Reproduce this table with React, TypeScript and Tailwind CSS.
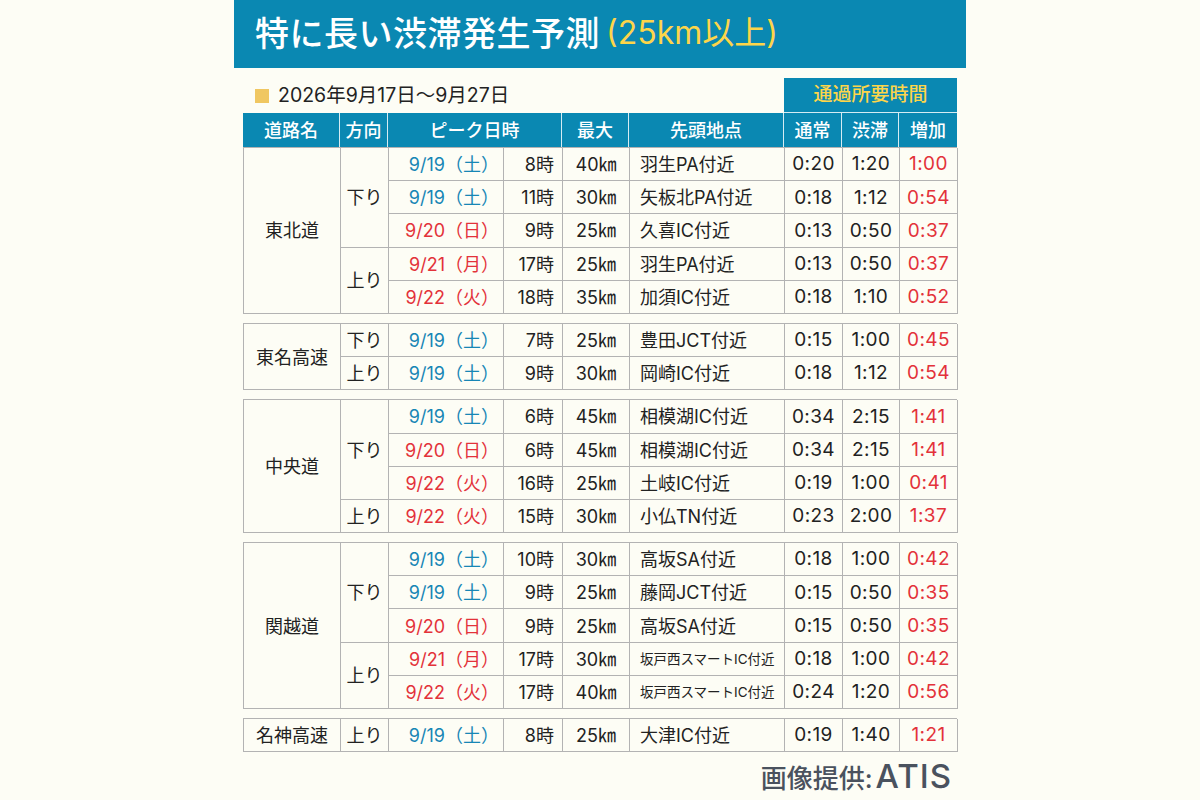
import React from 'react';

type Row = {
  date: string;
  red?: boolean;
  hour: string;
  km: string;
  place: string;
  small?: boolean;
  normal: string;
  jam: string;
  diff: string;
};

type Dir = { dir: string; rows: Row[] };
type Group = { road: string; dirs: Dir[] };

const groups: Group[] = [
  {
    road: '東北道',
    dirs: [
      {
        dir: '下り',
        rows: [
          { date: '9/19（土）', hour: '8時', km: '40㎞', place: '羽生PA付近', normal: '0:20', jam: '1:20', diff: '1:00' },
          { date: '9/19（土）', hour: '11時', km: '30㎞', place: '矢板北PA付近', normal: '0:18', jam: '1:12', diff: '0:54' },
          { date: '9/20（日）', red: true, hour: '9時', km: '25㎞', place: '久喜IC付近', normal: '0:13', jam: '0:50', diff: '0:37' },
        ],
      },
      {
        dir: '上り',
        rows: [
          { date: '9/21（月）', red: true, hour: '17時', km: '25㎞', place: '羽生PA付近', normal: '0:13', jam: '0:50', diff: '0:37' },
          { date: '9/22（火）', red: true, hour: '18時', km: '35㎞', place: '加須IC付近', normal: '0:18', jam: '1:10', diff: '0:52' },
        ],
      },
    ],
  },
  {
    road: '東名高速',
    dirs: [
      { dir: '下り', rows: [{ date: '9/19（土）', hour: '7時', km: '25㎞', place: '豊田JCT付近', normal: '0:15', jam: '1:00', diff: '0:45' }] },
      { dir: '上り', rows: [{ date: '9/19（土）', hour: '9時', km: '30㎞', place: '岡崎IC付近', normal: '0:18', jam: '1:12', diff: '0:54' }] },
    ],
  },
  {
    road: '中央道',
    dirs: [
      {
        dir: '下り',
        rows: [
          { date: '9/19（土）', hour: '6時', km: '45㎞', place: '相模湖IC付近', normal: '0:34', jam: '2:15', diff: '1:41' },
          { date: '9/20（日）', red: true, hour: '6時', km: '45㎞', place: '相模湖IC付近', normal: '0:34', jam: '2:15', diff: '1:41' },
          { date: '9/22（火）', red: true, hour: '16時', km: '25㎞', place: '土岐IC付近', normal: '0:19', jam: '1:00', diff: '0:41' },
        ],
      },
      { dir: '上り', rows: [{ date: '9/22（火）', red: true, hour: '15時', km: '30㎞', place: '小仏TN付近', normal: '0:23', jam: '2:00', diff: '1:37' }] },
    ],
  },
  {
    road: '関越道',
    dirs: [
      {
        dir: '下り',
        rows: [
          { date: '9/19（土）', hour: '10時', km: '30㎞', place: '高坂SA付近', normal: '0:18', jam: '1:00', diff: '0:42' },
          { date: '9/19（土）', hour: '9時', km: '25㎞', place: '藤岡JCT付近', normal: '0:15', jam: '0:50', diff: '0:35' },
          { date: '9/20（日）', red: true, hour: '9時', km: '25㎞', place: '高坂SA付近', normal: '0:15', jam: '0:50', diff: '0:35' },
        ],
      },
      {
        dir: '上り',
        rows: [
          { date: '9/21（月）', red: true, hour: '17時', km: '30㎞', place: '坂戸西スマートIC付近', small: true, normal: '0:18', jam: '1:00', diff: '0:42' },
          { date: '9/22（火）', red: true, hour: '17時', km: '40㎞', place: '坂戸西スマートIC付近', small: true, normal: '0:24', jam: '1:20', diff: '0:56' },
        ],
      },
    ],
  },
  {
    road: '名神高速',
    dirs: [{ dir: '上り', rows: [{ date: '9/19（土）', hour: '8時', km: '25㎞', place: '大津IC付近', normal: '0:19', jam: '1:40', diff: '1:21' }] }],
  },
];

const span: Record<number, string> = {
  1: 'row-span-1',
  2: 'row-span-2',
  3: 'row-span-3',
  4: 'row-span-4',
  5: 'row-span-5',
};

const cols = 'grid grid-cols-[97px_48px_115px_59px_67px_155px_58px_57px_58px]';
const cell = 'flex items-center pt-[1px] border-r border-b border-[#b3b3b3]';
const time = 'justify-center text-[19px] tracking-[0.4px]';

function GroupTable({ group }: { group: Group }) {
  const total = group.dirs.reduce((n, d) => n + d.rows.length, 0);
  return (
    <div className={`${cols} auto-rows-[33.2px] border-l border-t border-[#b3b3b3] text-[18px] text-[#222]`}>
      <div className={`${cell} ${span[total]} justify-center`}>{group.road}</div>
      {group.dirs.map((d, di) => (
        <React.Fragment key={di}>
          <div className={`${cell} ${span[d.rows.length]} justify-center`}>{d.dir}</div>
          {d.rows.map((r, ri) => (
            <React.Fragment key={ri}>
              <div className={`${cell} justify-end pr-[4px] ${r.red ? 'text-[#e3323a]' : 'text-[#1786b5]'}`}>{r.date}</div>
              <div className={`${cell} justify-end pr-[8px]`}>{r.hour}</div>
              <div className={`${cell} justify-center`}>{r.km}</div>
              <div className={`${cell} pl-[10px] ${r.small ? 'text-[13.5px]' : ''}`}>{r.place}</div>
              <div className={`${cell} ${time}`}>{r.normal}</div>
              <div className={`${cell} ${time}`}>{r.jam}</div>
              <div className={`${cell} ${time} text-[#e3323a]`}>{r.diff}</div>
            </React.Fragment>
          ))}
        </React.Fragment>
      ))}
    </div>
  );
}

export default function App() {
  return (
    <div
      className="min-h-screen w-full bg-[#fdfdf5] flex justify-center"
      style={{ fontFamily: 'Inter, "Noto Sans CJK JP", sans-serif' }}
    >
      <div className="w-[732px]">
        {/* Title */}
        <div className="h-[68px] bg-[#0a88b2] flex items-center pl-[21px] pb-[2px]">
          <span className="text-[34px] font-medium text-white tracking-[0.5px]">特に長い渋滞発生予測</span>
          <span className="ml-[6px] text-[32px] text-[#fdd54a]">(25km以上)</span>
        </div>

        <div className="px-[9px]">
          {/* Period + time header */}
          <div className="flex items-center justify-between pt-[10px]">
            <div className="flex items-center gap-[9px] pl-[12px]">
              <span className="w-[14px] h-[14px] bg-[#f0c761]" />
              <span className="text-[19.5px] text-[#222]">2026年9月17日～9月27日</span>
            </div>
            <div className="w-[173px] h-[35px] bg-[#0a88b2] border-b border-[#d6ecf3] flex items-center justify-center text-[19px] font-medium text-[#fdd54a]">
              通過所要時間
            </div>
          </div>

          {/* Column headings */}
          <div className={`${cols} h-[34px] bg-[#0a88b2] text-white text-[18px] font-medium`}>
            {['道路名', '方向', 'ピーク日時', '最大', '先頭地点', '通常', '渋滞', '増加'].map((h, i) => (
              <div
                key={h}
                className={`flex items-center justify-center ${i === 2 ? 'col-span-2' : ''} ${i < 7 ? 'border-r border-[#d6ecf3]' : ''}`}
              >
                {h}
              </div>
            ))}
          </div>

          <div className="flex flex-col gap-[9px]">
            {groups.map(g => (
              <GroupTable key={g.road} group={g} />
            ))}
          </div>

          {/* Credit */}
          <div className="flex justify-end items-end gap-[3px] pr-[5px] pt-[4px] text-[#4a525e]">
            <span className="text-[26px] font-medium leading-[34px]">画像提供:</span>
            <span className="text-[33px] font-medium leading-[40px] tracking-[1px]">ATIS</span>
          </div>
        </div>
      </div>
    </div>
  );
}
